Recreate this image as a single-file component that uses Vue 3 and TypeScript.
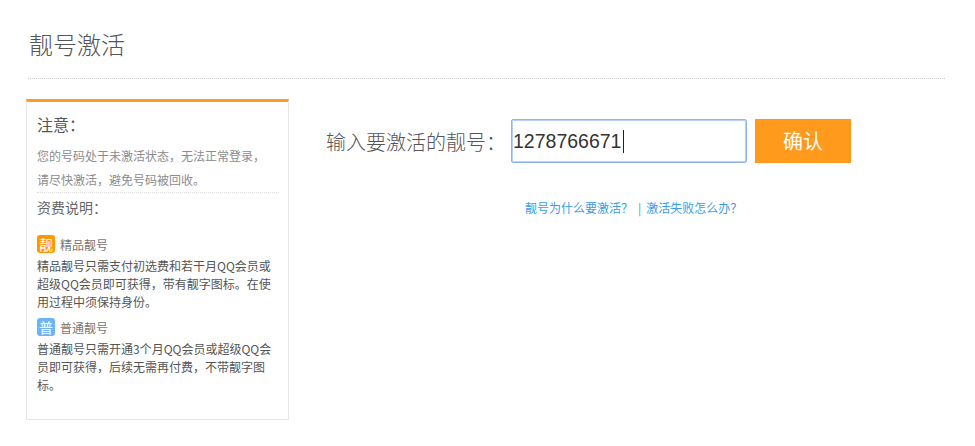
<script setup lang="ts">
interface Tier { badge: string; name: string; tone: string; desc: string }
const tiers: Tier[] = [
  { badge: '靓', name: '精品靓号', tone: 'orange', desc: '精品靓号只需支付初选费和若干月QQ会员或超级QQ会员即可获得，带有靓字图标。在使用过程中须保持身份。' },
  { badge: '普', name: '普通靓号', tone: 'blue', desc: '普通靓号只需开通3个月QQ会员或超级QQ会员即可获得，后续无需再付费，不带靓字图标。' },
]
const warnLines: string[] = ['您的号码处于未激活状态，无法正常登录，', '请尽快激活，避免号码被回收。']
</script>

<template>
  <div class="page">
    <h1 class="title">靓号激活</h1>
    <div class="content">
      <aside class="side">
        <h2 class="notice">注意：</h2>
        <p class="warn"><span v-for="l in warnLines" :key="l" class="warn-line">{{ l }}</span></p>
        <h3 class="fee">资费说明：</h3>
        <div v-for="t in tiers" :key="t.name" class="tier">
          <div class="tier-head">
            <span class="badge" :class="t.tone">{{ t.badge }}</span>
            <span class="tier-name">{{ t.name }}</span>
          </div>
          <p class="tier-desc">{{ t.desc }}</p>
        </div>
      </aside>
      <main class="main">
        <div class="form">
          <span class="label">输入要激活的靓号：</span>
          <div class="input"><span>1278766671</span><i class="caret"></i></div>
          <button class="confirm" type="button">确认</button>
        </div>
        <div class="links">
          <a>靓号为什么要激活？</a><span class="sep">|</span><a>激活失败怎么办？</a>
        </div>
      </main>
    </div>
  </div>
</template>

<style scoped>
.page {
  width: 975px;
  height: 446px;
  box-sizing: border-box;
  padding: 0 30px 0 26px;
  font-family: "Noto Sans CJK SC", "Liberation Sans", sans-serif;
  background: #fff;
  overflow: hidden;
}
.title {
  margin: 0 0 0 2px;
  height: 78px;
  box-sizing: content-box;
  border-bottom: 1px dotted #ccc;
  padding-left: 1px;
  font-size: 24px;
  font-weight: 300;
  line-height: 87px;
  color: #555;
}
.content {
  display: flex;
  margin-top: 20px;
}
.side {
  width: 263px;
  height: 321px;
  box-sizing: border-box;
  border: 1px solid #e6e6e6;
  border-top: 3px solid #ff9c1f;
  padding: 0 9px 0 10px;
  flex: none;
}
.notice {
  margin: 9px 0 0;
  font-size: 16px;
  font-weight: 400;
  line-height: 26px;
  color: #555;
}
.warn {
  margin: 7px 0 0;
  font-size: 12px;
  line-height: 24px;
  color: #8c8c8c;
  border-bottom: 1px dotted #ddd;
}
.warn-line { display: block; }
.fee {
  margin: 3px 0 17px;
  font-size: 14px;
  font-weight: 400;
  line-height: 22px;
  color: #666;
}
.tier + .tier { margin-top: 7px; }
.tier-head {
  display: flex;
  align-items: center;
  gap: 5px;
  height: 18px;
}
.badge {
  width: 18px;
  height: 18px;
  border-radius: 3px;
  color: #fff;
  font-size: 14px;
  line-height: 18px;
  text-align: center;
}
.orange { background: #ff9700; }
.blue { background: #6fb3f7; }
.tier-name {
  font-size: 12px;
  color: #777;
}
.tier-desc {
  margin: 4px 0 0;
  font-size: 12px;
  line-height: 18px;
  color: #555;
}
.main {
  flex: 1;
  padding: 20px 0 0 37px;
}
.form {
  display: flex;
  align-items: center;
  height: 44px;
}
.label {
  width: 185px;
  flex: none;
  white-space: nowrap;
  font-size: 20px;
  font-weight: 300;
  color: #555;
}
.input {
  width: 236px;
  height: 44px;
  box-sizing: border-box;
  border: 1px solid #8fb4ee;
  border-radius: 2px;
  box-shadow: inset 0 0 0 1px #b9d0f5;
  padding-left: 1px;
  display: flex;
  align-items: center;
  font-family: "Liberation Sans", sans-serif;
  font-size: 19.5px;
  color: #333;
}
.caret {
  width: 1px;
  height: 23px;
  margin-left: 2px;
  background: #222;
}
.confirm {
  width: 96px;
  height: 44px;
  margin-left: 8px;
  border: 0;
  padding: 0 0 2px;
  background: #ff9a1c;
  color: #fff;
  font-family: inherit;
  font-size: 20px;
  font-weight: 400;
}
.links {
  margin-top: 36px;
  padding-left: 199px;
  display: flex;
  align-items: center;
  font-size: 12px;
  line-height: 18px;
  color: #3a9ce8;
}
.sep { margin: 0 5px 0 5px; }
</style>
